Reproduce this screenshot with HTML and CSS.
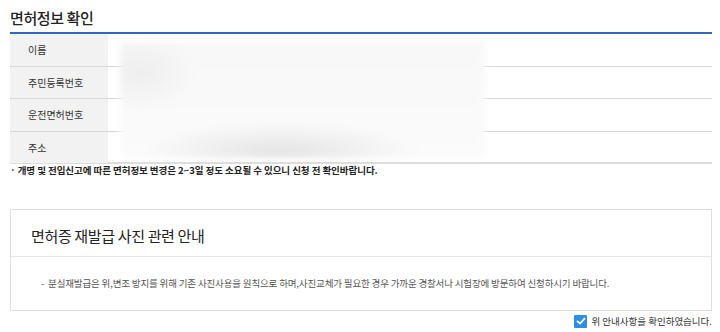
FILE: index.html
```html
<!DOCTYPE html>
<html>
  <head>
    <title>면허정보 확인</title>
    <link rel="stylesheet" href="styles.css">
  </head>
  <body>
    <h2 class="title">면허정보 확인</h2>

    <div class="info">
      <div class="row">
        <div class="label">이름</div>
        <div class="value"></div>
      </div>
      <div class="row">
        <div class="label">주민등록번호</div>
        <div class="value"></div>
      </div>
      <div class="row">
        <div class="label">운전면허번호</div>
        <div class="value"></div>
      </div>
      <div class="row last">
        <div class="label">주소</div>
        <div class="value"></div>
      </div>
      <div class="mask"></div>
    </div>

    <p class="note">· 개명 및 전입신고에 따른 면허정보 변경은 2~3일 정도 소요될 수 있으니 신청 전 확인바랍니다.</p>

    <div class="guide">
      <div class="guide-head">면허증 재발급 사진 관련 안내</div>
      <div class="guide-body">-&nbsp; 분실재발급은 위,변조 방지를 위해 기존 사진사용을 원칙으로 하며,사진교체가 필요한 경우 가까운 경찰서나 시험장에 방문하여 신청하시기 바랍니다.</div>
    </div>

    <label class="agree">
      <span class="check">
        <svg width="10" height="8" viewBox="0 0 10 8"><path d="M1 4 L4 6.5 L9 1.2" fill="none" stroke="#fff" stroke-width="1.8"/></svg>
      </span>
      위 안내사항을 확인하였습니다.
    </label>
  </body>
</html>
```

FILE: styles.css
```css
body {
  margin: 0;
  padding: 0 8px 0 10px;
  font-family: "Noto Sans CJK KR", "Noto Sans", sans-serif;
  color: #222;
  background: #fff;
}

.title {
  margin: 0;
  padding-top: 5px;
  height: 27px;
  font-size: 15px;
  font-weight: 500;
  letter-spacing: -0.4px;
  line-height: 25px;
  color: #222;
  border-bottom: 2px solid #2f66c0;
}

.info {
  position: relative;
}

.row {
  display: grid;
  grid-template-columns: 98px 1fr;
  height: 31.5px;
  border-bottom: 1px solid #d8d8d8;
}

.row.last {
  height: 30.5px;
  border-bottom: 2px solid #dcdcdc;
}

.label {
  background: #f2f2f2;
  padding-left: 18px;
  font-size: 10px;
  line-height: 31px;
  color: #333;
}

.mask {
  position: absolute;
  left: 110px;
  top: 8px;
  width: 365px;
  height: 116px;
  background:
    radial-gradient(ellipse 140px 30px at 160px 110px, #e4e4e4, rgba(255,255,255,0)),
    radial-gradient(ellipse 60px 40px at 20px 30px, #eeeeee, rgba(255,255,255,0)),
    linear-gradient(#f8f8f8, #fbfbfb);
  filter: blur(3px);
}

.note {
  margin: 0;
  font-size: 9.5px;
  font-weight: bold;
  letter-spacing: -0.05px;
  line-height: 13px;
  color: #222;
}

.guide {
  margin-top: 32px;
  border: 1px solid #dedede;
}

.guide-head {
  height: 46px;
  padding-left: 20px;
  font-size: 15px;
  letter-spacing: -0.35px;
  line-height: 52px;
  color: #222;
  border-bottom: 1px solid #e6e6e6;
}

.guide-body {
  height: 53px;
  padding-left: 30px;
  font-size: 9.5px;
  letter-spacing: -0.15px;
  line-height: 52px;
  color: #555;
}

.agree {
  display: flex;
  justify-content: flex-end;
  align-items: center;
  gap: 4px;
  margin-top: 3px;
  font-size: 9.5px;
  color: #333;
}

.check {
  display: flex;
  align-items: center;
  justify-content: center;
  width: 13px;
  height: 13px;
  background: #2d8ee8;
  border-radius: 1px;
}
```
